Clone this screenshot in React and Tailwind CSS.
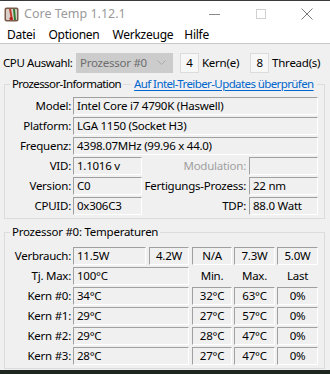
import React from "react";

const F = { fontFamily: '"Noto Sans", "Open Sans", sans-serif' };

function Box({ w, align = "left", children, ml = 0 }) {
  return (
    <div
      className={`h-[18px] shrink-0 flex items-center border-t border-l border-t-[#a0a0a0] border-l-[#a0a0a0] border-b border-r border-b-white border-r-white px-[3px] whitespace-nowrap ${
        align === "center" ? "justify-center" : align === "right" ? "justify-end" : "justify-start"
      }`}
      style={{ width: w, marginLeft: ml }}
    >
      {children}
    </div>
  );
}

function Label({ children, w = 66, gray = false }) {
  return (
    <div
      className={`text-right whitespace-nowrap shrink-0 ${gray ? "text-[#a0a0a0]" : "text-black"}`}
      style={{ width: w }}
    >
      {children}
    </div>
  );
}

function Row({ children }) {
  return <div className="flex items-center h-[18px]">{children}</div>;
}

export default function App() {
  return (
    <div
      className="w-[330px] h-[374px] bg-[#f0f0f0] flex flex-col overflow-hidden text-[11.5px] leading-none text-black tracking-[-0.25px] whitespace-nowrap"
      style={F}
    >
      <div className="h-[1px] bg-[#3a3a3a] shrink-0" />
      {/* Title bar */}
      <div className="h-[26px] shrink-0 bg-white flex items-center">
        <svg width="15" height="15" viewBox="0 0 15 15" className="ml-[4px] shrink-0">
          <rect x="0.5" y="0.5" width="14" height="14" rx="2" fill="#7a5a48" />
          <rect x="2" y="2" width="11" height="11" rx="1" fill="#d8d0c8" />
          <path d="M5 2 L7 13 L9 13 L7 2 Z" fill="#c0392b" />
          <path d="M9 2 L10 13 L12 13 L11 2 Z" fill="#2e7d32" />
          <circle cx="7" cy="11.5" r="1.6" fill="#b71c1c" />
        </svg>
        <span className="ml-[5px] text-[12.5px] text-[#9a9a9a] tracking-normal">Core Temp 1.12.1</span>
        <div className="ml-auto flex items-center">
          <div className="w-[11px] h-[1px] bg-[#8a8a8a] mr-[36px]" />
          <div className="w-[10px] h-[10px] border border-[#d0d0d0] mr-[35px]" />
          <svg width="12" height="12" viewBox="0 0 12 12" className="mr-[17px]">
            <path d="M0.5 0.5 L11.5 11.5 M11.5 0.5 L0.5 11.5" stroke="#7a7a7a" strokeWidth="1" />
          </svg>
        </div>
      </div>
      {/* Menu */}
      <div className="h-[17px] shrink-0 bg-white flex items-center border-b border-[#c8c8c8] text-black text-[12px]">
        <span className="ml-[7px]">Datei</span>
        <span className="ml-[13px]">Optionen</span>
        <span className="ml-[13px]">Werkzeuge</span>
        <span className="ml-[11px]">Hilfe</span>
      </div>
      {/* CPU row */}
      <div className="flex items-center h-[20px] mt-[9px] shrink-0">
        <span className="ml-[3px] w-[70px] shrink-0 tracking-[-0.4px]">CPU Auswahl:</span>
        <div className="ml-[3px] w-[97px] shrink-0 h-[20px] bg-[#cccccc] flex items-center text-[#6d6d6d] pl-[4px]">
          <span>Prozessor #0</span>
          <svg width="9" height="6" viewBox="0 0 9 6" className="ml-auto mr-[7px]">
            <path d="M0.5 0.5 L4.5 4.5 L8.5 0.5" stroke="#a8a8a8" fill="none" />
          </svg>
        </div>
        <div className="ml-[7px] w-[19px] shrink-0 h-[20px] bg-[#f7f7f7] border border-[#dcdcdc] flex items-center justify-center">4</div>
        <span className="ml-[3px]">Kern(e)</span>
        <div className="ml-[11px] w-[19px] shrink-0 h-[20px] bg-[#f7f7f7] border border-[#dcdcdc] flex items-center justify-center">8</div>
        <span className="ml-[3px]">Thread(s)</span>
      </div>
      {/* Group 1 */}
      <fieldset className="ml-[4px] w-[321px] shrink-0 border border-[#dcdcdc] mt-[3px] pb-[3px] pr-[6px] min-w-0">
        <legend className="ml-[5px] h-[16px] whitespace-nowrap">
          <div className="flex items-center h-[16px] w-max tracking-[-0.6px]">
            <span className="px-[2px]">Prozessor-Information</span>
            <span className="w-[8px] h-px bg-[#dcdcdc]" />
            <span className="px-[3px] text-[#0066cc] underline underline-offset-2">Auf Intel-Treiber-Updates überprüfen</span>
          </div>
        </legend>
        <div className="flex flex-col gap-[2px] mt-[5px]">
          <Row>
            <Label>Model:</Label>
            <Box w={245} ml={2}>Intel Core i7 4790K (Haswell)</Box>
          </Row>
          <Row>
            <Label>Platform:</Label>
            <Box w={245} ml={2}>LGA 1150 (Socket H3)</Box>
          </Row>
          <Row>
            <Label>Frequenz:</Label>
            <Box w={245} ml={2}>4398.07MHz (99.96 x 44.0)</Box>
          </Row>
          <Row>
            <Label>VID:</Label>
            <Box w={69} ml={2}>1.1016 v</Box>
            <Label w={104} gray>Modulation:</Label>
            <Box w={69} ml={3}></Box>
          </Row>
          <Row>
            <Label>Version:</Label>
            <Box w={69} ml={2}>C0</Box>
            <Label w={104}>Fertigungs-Prozess:</Label>
            <Box w={69} ml={3}>22 nm</Box>
          </Row>
          <Row>
            <Label>CPUID:</Label>
            <Box w={69} ml={2}>0x306C3</Box>
            <Label w={104}>TDP:</Label>
            <Box w={69} ml={3}>88.0 Watt</Box>
          </Row>
        </div>
      </fieldset>
      {/* Group 2 */}
      <fieldset className="ml-[4px] w-[321px] shrink-0 border border-[#dcdcdc] mt-[5px] pb-[3px] pr-[6px] min-w-0">
        <legend className="ml-[5px] h-[16px] whitespace-nowrap">
          <div className="flex items-center h-[16px] w-max">
            <span className="px-[2px]">Prozessor #0: Temperaturen</span>
          </div>
        </legend>
        <div className="flex flex-col gap-[2px] mt-[7px]">
          <Row>
            <Label>Verbrauch:</Label>
            <Box w={73} ml={2}>11.5W</Box>
            <Box w={40} ml={3} align="center">4.2W</Box>
            <Box w={40} ml={3} align="center">N/A</Box>
            <Box w={41} ml={2} align="center">7.3W</Box>
            <Box w={41} ml={2} align="center">5.0W</Box>
          </Row>
          <Row>
            <Label>Tj. Max:</Label>
            <Box w={116} ml={2}>100°C</Box>
            <div className="w-[40px] ml-[3px] text-center">Min.</div>
            <div className="w-[41px] ml-[2px] text-center">Max.</div>
            <div className="w-[41px] ml-[2px] text-center">Last</div>
          </Row>
          {[
            ["Kern #0:", "34°C", "32°C", "63°C", "0%"],
            ["Kern #1:", "29°C", "27°C", "57°C", "0%"],
            ["Kern #2:", "29°C", "28°C", "47°C", "0%"],
            ["Kern #3:", "28°C", "27°C", "47°C", "0%"],
          ].map((r) => (
            <Row key={r[0]}>
              <Label>{r[0]}</Label>
              <Box w={116} ml={2}>{r[1]}</Box>
              <Box w={40} ml={3} align="center">{r[2]}</Box>
              <Box w={41} ml={2} align="center">{r[3]}</Box>
              <Box w={41} ml={2} align="center">{r[4]}</Box>
            </Row>
          ))}
        </div>
      </fieldset>
      <div className="flex-1" />
      <div className="h-[4px] bg-[#1f2620] shrink-0" />
    </div>
  );
}
